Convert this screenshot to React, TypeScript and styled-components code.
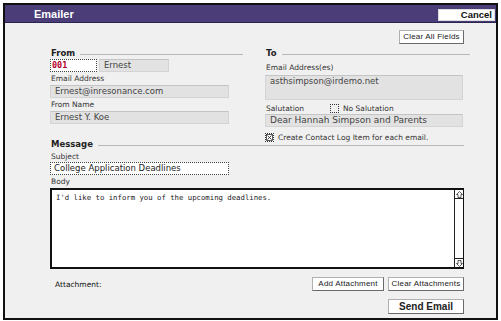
import React from "react";
import styled, {createGlobalStyle} from "styled-components";

const GlobalStyle = createGlobalStyle`
  html, body {
    margin: 0;
    padding: 0;
    background: #ffffff;
  }
  body {
    font-family: "DejaVu Sans", Verdana, sans-serif;
  }
`;

const Window = styled.div`
  margin: 3px 0 0 3px;
  width: 491px;
  border: 2px solid #111;
  background: #f0f0f0;
  box-sizing: content-box;
`;

const Header = styled.div`
  height: 17px;
  background: #4a3d78;
  display: flex;
  align-items: center;
  justify-content: space-between;
  padding: 0 1px 0 29px;
  border-bottom: 1px solid #2c2450;
`;

const Title = styled.span`
  font-family: "Liberation Sans", Arial, sans-serif;
  font-weight: bold;
  font-size: 11px;
  color: #ffffff;
`;

const CancelButton = styled.button`
  width: 57px;
  height: 12px;
  padding: 0 2px 0 0;
  margin-top: 3px;
  border: 1px solid #ddd;
  background: #ffffff;
  text-align: right;
  font-family: "Liberation Sans", Arial, sans-serif;
  font-weight: bold;
  font-size: 9.5px;
  line-height: 10px;
  color: #111;
`;

const Content = styled.div`
  padding: 7px 32px 4px 45px;
  display: flex;
  flex-direction: column;
`;

const Button = styled.button<{ $w: number; $bold?: boolean }>`
  width: ${p => p.$w}px;
  height: ${p => (p.$bold ? 15 : 14)}px;
  padding: 0;
  background: #ffffff;
  border: 1px solid #b0b0b0;
  border-right-color: #6a6a6a;
  border-bottom-color: #6a6a6a;
  font-family: "Liberation Sans", Arial, sans-serif;
  font-size: ${p => (p.$bold ? 10 : 8)}px;
  font-weight: ${p => (p.$bold ? "bold" : "normal")};
  letter-spacing: ${p => (p.$bold ? 0 : 0.2)}px;
  color: #222;
  line-height: 12px;
`;

const TopBar = styled.div`
  display: flex;
  justify-content: flex-end;
  margin-bottom: 3px;
`;

const Columns = styled.div`
  display: grid;
  grid-template-columns: 193px 205px;
  column-gap: 22px;
  margin-right: -7px;
`;

const Column = styled.div`
  display: flex;
  flex-direction: column;
`;

const SectionHead = styled.div`
  display: flex;
  align-items: center;
  height: 12px;
`;

const SectionTitle = styled.span`
  font-weight: bold;
  font-size: 8.5px;
  color: #222;
  padding-left: 1px;
`;

const SectionLine = styled.div`
  flex: 1;
  height: 1px;
  background: #b8b8b8;
  margin: 2px 0 0 5px;
`;

const Label = styled.div<{ $h?: number }>`
  height: ${p => p.$h ?? 13}px;
  display: flex;
  align-items: center;
  font-size: 7.5px;
  color: #333;
  padding-left: 1px;
`;

const IdRow = styled.div`
  display: flex;
  gap: 2px;
`;

const IdInput = styled.div`
  width: 44px;
  height: 11px;
  border: 1px dotted #444;
  background: #ffffff;
  font-family: "DejaVu Sans Mono", monospace;
  font-weight: bold;
  font-size: 8.5px;
  line-height: 11px;
  color: #b3002a;
  padding-left: 1px;
`;

const GreyField = styled.div<{ $w: number; $h?: number; $size?: number }>`
  width: ${p => p.$w}px;
  height: ${p => p.$h ?? 13}px;
  box-sizing: border-box;
  background: #e2e2e2;
  border: 1px solid #d4d4d4;
  border-top-color: #c4c4c4;
  font-size: ${p => p.$size ?? 8.5}px;
  line-height: 11px;
  color: #444;
  padding: 0 0 0 4px;
  white-space: nowrap;
  overflow: hidden;
`;

const SubjectInput = styled.div`
  width: 179px;
  height: 13px;
  box-sizing: border-box;
  background: #ffffff;
  border: 1px dotted #444;
  font-size: 8.5px;
  line-height: 11px;
  color: #222;
  padding-left: 3px;
`;

const CheckRow = styled.div<{ $mt: number }>`
  display: flex;
  align-items: center;
  height: 12px;
  margin-top: ${p => p.$mt}px;
  font-size: 7.5px;
  color: #333;
`;

const SalutationLabel = styled.span`
  width: 64px;
  padding-left: 1px;
`;

const Check = styled.span<{ $checked?: boolean }>`
  width: 7px;
  height: 7px;
  border: 1px dotted #333;
  margin-right: 4px;
  display: flex;
  align-items: center;
  justify-content: center;
  background: ${p => (p.$checked ? "#ffffff" : "transparent")};
`;

const MessageSection = styled.div`
  display: flex;
  flex-direction: column;
  margin-top: -5px;
`;

const BodyBox = styled.div`
  height: 77px;
  background: #ffffff;
  border-style: solid;
  border-color: #111;
  border-width: 2px 1px 2px 2px;
  display: flex;
`;

const BodyText = styled.div`
  flex: 1;
  padding: 3px 4px;
  font-family: "DejaVu Sans Mono", monospace;
  font-size: 7.3px;
  color: #222;
`;

const Scrollbar = styled.div`
  width: 8px;
  border-left: 1px solid #222;
  display: flex;
  flex-direction: column;
  justify-content: space-between;
  background: #ffffff;
`;

const ScrollArrow = styled.div<{ $bottom?: boolean }>`
  height: 8px;
  display: flex;
  align-items: center;
  justify-content: center;
  border-top: ${p => (p.$bottom ? "1px solid #222" : "none")};
  border-bottom: ${p => (p.$bottom ? "none" : "1px solid #222")};
`;

const AttachRow = styled.div`
  display: flex;
  align-items: center;
  gap: 4px;
  margin-top: 8px;
`;

const AttachLabel = styled.span`
  flex: 1;
  font-size: 7.5px;
  color: #111;
  padding-left: 5px;
`;

const SendRow = styled.div`
  display: flex;
  justify-content: flex-end;
  margin-top: 8px;
`;

function Arrow({down}: { down?: boolean }) {
    return (
        <svg width="7" height="7" viewBox="0 0 7 7" style={{transform: down ? "rotate(180deg)" : undefined}}>
            <path d="M3.5 0.5 L6.5 3.5 L5 3.5 L5 6.5 L2 6.5 L2 3.5 L0.5 3.5 Z" fill="none" stroke="#333"
                  strokeWidth="0.8"/>
        </svg>
    );
}

function CrossMark() {
    return (
        <svg width="7" height="7" viewBox="0 0 7 7">
            <rect x="0.5" y="0.5" width="6" height="6" fill="none" stroke="#333" strokeWidth="0.8"/>
            <path d="M1.5 1.5 L5.5 5.5 M5.5 1.5 L1.5 5.5" stroke="#333" strokeWidth="0.9"/>
        </svg>
    );
}

export default function App() {
    return (
        <>
            <GlobalStyle/>
            <Window>
                <Header>
                    <Title>Emailer</Title>
                    <CancelButton>Cancel</CancelButton>
                </Header>
                <Content>
                    <TopBar>
                        <Button $w={65}>Clear All Fields</Button>
                    </TopBar>
                    <Columns>
                        <Column>
                            <SectionHead>
                                <SectionTitle>From</SectionTitle>
                                <SectionLine/>
                            </SectionHead>
                            <IdRow>
                                <IdInput>001</IdInput>
                                <GreyField $w={70}>Ernest</GreyField>
                            </IdRow>
                            <Label>Email Address</Label>
                            <GreyField $w={179}>Ernest@inresonance.com</GreyField>
                            <Label>From Name</Label>
                            <GreyField $w={179}>Ernest Y. Koe</GreyField>
                        </Column>
                        <Column>
                            <SectionHead>
                                <SectionTitle>To</SectionTitle>
                                <SectionLine/>
                            </SectionHead>
                            <Label $h={16}>Email Address(es)</Label>
                            <GreyField $w={198} $h={25}>asthsimpson@irdemo.net</GreyField>
                            <CheckRow $mt={2}>
                                <SalutationLabel>Salutation</SalutationLabel>
                                <Check/>
                                No Salutation
                            </CheckRow>
                            <GreyField $w={198} $size={9}>Dear Hannah Simpson and Parents</GreyField>
                            <CheckRow $mt={4}>
                                <Check $checked><CrossMark/></Check>
                                Create Contact Log Item for each email.
                            </CheckRow>
                        </Column>
                    </Columns>
                    <MessageSection>
                        <SectionHead>
                            <SectionTitle>Message</SectionTitle>
                            <SectionLine/>
                        </SectionHead>
                        <Label $h={12}>Subject</Label>
                        <SubjectInput>College Application Deadlines</SubjectInput>
                        <Label>Body</Label>
                        <BodyBox>
                            <BodyText>I'd like to inform you of the upcoming deadlines.</BodyText>
                            <Scrollbar>
                                <ScrollArrow><Arrow/></ScrollArrow>
                                <ScrollArrow $bottom><Arrow down/></ScrollArrow>
                            </Scrollbar>
                        </BodyBox>
                        <AttachRow>
                            <AttachLabel>Attachment:</AttachLabel>
                            <Button $w={72}>Add Attachment</Button>
                            <Button $w={76}>Clear Attachments</Button>
                        </AttachRow>
                        <SendRow>
                            <Button $w={76} $bold>Send Email</Button>
                        </SendRow>
                    </MessageSection>
                </Content>
            </Window>
        </>
    );
}
